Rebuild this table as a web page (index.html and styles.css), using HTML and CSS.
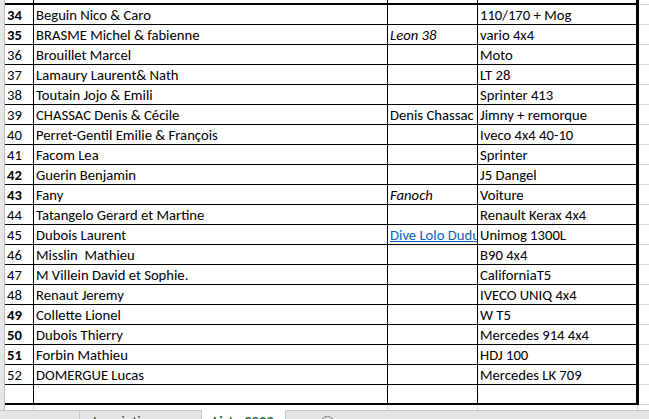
FILE: index.html
```html
<!DOCTYPE html>
<html lang="fr">
<head>
<meta charset="utf-8">
<title>Liste 2022</title>
<link rel="stylesheet" href="styles.css">
</head>
<body>
<div class="sheet">
  <div class="row tail"><div class="hdr"></div><div class="c"></div><div class="c"></div><div class="c"></div><div class="c d"></div><div class="e"></div></div>
  <div class="row first"><div class="hdr"></div><div class="c n bold">34</div><div class="c">Beguin Nico &amp; Caro</div><div class="c"></div><div class="c d">110/170 + Mog</div><div class="e"></div></div>
  <div class="row"><div class="hdr"></div><div class="c n bold">35</div><div class="c">BRASME Michel &amp; fabienne</div><div class="c"><i>Leon 38</i></div><div class="c d">vario 4x4</div><div class="e"></div></div>
  <div class="row"><div class="hdr"></div><div class="c n">36</div><div class="c">Brouillet Marcel</div><div class="c"></div><div class="c d">Moto</div><div class="e"></div></div>
  <div class="row"><div class="hdr"></div><div class="c n">37</div><div class="c">Lamaury Laurent&amp; Nath</div><div class="c"></div><div class="c d">LT 28</div><div class="e"></div></div>
  <div class="row"><div class="hdr"></div><div class="c n">38</div><div class="c">Toutain Jojo &amp; Emili</div><div class="c"></div><div class="c d">Sprinter 413</div><div class="e"></div></div>
  <div class="row"><div class="hdr"></div><div class="c n">39</div><div class="c">CHASSAC Denis &amp; Cécile</div><div class="c">Denis Chassac</div><div class="c d">Jimny + remorque</div><div class="e"></div></div>
  <div class="row"><div class="hdr"></div><div class="c n">40</div><div class="c">Perret-Gentil Emilie &amp; François</div><div class="c"></div><div class="c d">Iveco 4x4 40-10</div><div class="e"></div></div>
  <div class="row"><div class="hdr"></div><div class="c n">41</div><div class="c">Facom Lea</div><div class="c"></div><div class="c d">Sprinter</div><div class="e"></div></div>
  <div class="row"><div class="hdr"></div><div class="c n bold">42</div><div class="c">Guerin Benjamin</div><div class="c"></div><div class="c d">J5 Dangel</div><div class="e"></div></div>
  <div class="row"><div class="hdr"></div><div class="c n bold">43</div><div class="c">Fany</div><div class="c"><i>Fanoch</i></div><div class="c d">Voiture</div><div class="e"></div></div>
  <div class="row"><div class="hdr"></div><div class="c n">44</div><div class="c">Tatangelo Gerard et Martine</div><div class="c"></div><div class="c d">Renault Kerax 4x4</div><div class="e"></div></div>
  <div class="row"><div class="hdr"></div><div class="c n">45</div><div class="c">Dubois Laurent</div><div class="c"><a class="link" href="#">Dive Lolo Dudu</a></div><div class="c d">Unimog 1300L</div><div class="e"></div></div>
  <div class="row"><div class="hdr"></div><div class="c n">46</div><div class="c">Misslin&nbsp; Mathieu</div><div class="c"></div><div class="c d">B90 4x4</div><div class="e"></div></div>
  <div class="row"><div class="hdr"></div><div class="c n">47</div><div class="c">M Villein David et Sophie.</div><div class="c"></div><div class="c d">CaliforniaT5</div><div class="e"></div></div>
  <div class="row"><div class="hdr"></div><div class="c n">48</div><div class="c">Renaut Jeremy</div><div class="c"></div><div class="c d">IVECO UNIQ 4x4</div><div class="e"></div></div>
  <div class="row"><div class="hdr"></div><div class="c n bold">49</div><div class="c">Collette Lionel</div><div class="c"></div><div class="c d">W T5</div><div class="e"></div></div>
  <div class="row"><div class="hdr"></div><div class="c n bold">50</div><div class="c">Dubois Thierry</div><div class="c"></div><div class="c d">Mercedes 914 4x4</div><div class="e"></div></div>
  <div class="row"><div class="hdr"></div><div class="c n bold">51</div><div class="c">Forbin Mathieu</div><div class="c"></div><div class="c d">HDJ 100</div><div class="e"></div></div>
  <div class="row"><div class="hdr"></div><div class="c n">52</div><div class="c">DOMERGUE Lucas</div><div class="c"></div><div class="c d">Mercedes LK 709</div><div class="e"></div></div>
  <div class="row last"><div class="hdr"></div><div class="c n"></div><div class="c"></div><div class="c"></div><div class="c d"></div><div class="e"></div></div>
  <div class="row after"><div class="hdr"></div><div class="c"></div><div class="c"></div><div class="c"></div><div class="c d"></div><div class="e"></div></div>
</div>
<div class="tabs">
  <div class="tab t1"></div>
  <div class="tab t2">Inscriptions</div>
  <div class="tab active">Liste 2022</div>
  <div class="rest"><span class="plus">+</span></div>
</div>
</body>
</html>
```

FILE: styles.css
```css
html, body {
  margin: 0;
  background: #fff;
}
body {
  width: 649px;
  height: 419px;
  overflow: hidden;
  font-family: Carlito, Calibri, "Liberation Sans", sans-serif;
  font-size: 14.667px;
  color: #000;
}
.row {
  display: grid;
  grid-template-columns: 5px 29px 354px 90px 161px 1fr;
  height: 20px;
}
.row > div {
  box-sizing: border-box;
  overflow: hidden;
  white-space: nowrap;
}
.hdr {
  background: #e6e6e6;
  border-right: 1px solid #bdbdbd;
}
.c {
  border-right: 1px solid #000;
  border-bottom: 1px solid #000;
  padding: 0 0 2px 2px;
  display: flex;
  align-items: flex-end;
  line-height: 14px;
}
.c.d {
  border-right-width: 3px;
}
.e {
  border-bottom: 1px solid #dadada;
}
.bold {
  font-weight: bold;
}
.link {
  color: #0563c1;
  text-decoration: underline;
}
.tail {
  height: 3px;
}
.tail .c,
.tail .e {
  border-bottom: 0;
}
.first {
  height: 22px;
}
.first .c {
  border-top: 2px solid #000;
}
.first .e {
  margin-top: 1px;
  border-top: 1px solid #dadada;
}
.last .c {
  border-bottom-width: 2px;
}
.after {
  height: 5px;
}
.after .c {
  border-bottom: 0;
  border-right-color: #dadada;
}
.after .c.d {
  border-right-width: 1px;
  margin-right: 1px;
}
.after .e {
  border-bottom: 0;
}
.tabs {
  display: flex;
  height: 30px;
  background: #e6e6e6;
}
.tab {
  box-sizing: border-box;
  height: 30px;
  border-top: 1px solid #c6c6c6;
  border-right: 1px solid #c6c6c6;
  padding-top: 3px;
  line-height: 14px;
  color: #444;
  text-align: center;
  white-space: nowrap;
}
.t1 { width: 80px; }
.t2 {
  width: 122px;
  text-align: left;
  padding-left: 13px;
}
.active {
  width: 84px;
  background: #fff;
  border-top-color: #fff;
  color: #217346;
  font-weight: bold;
}
.rest {
  flex: 1;
  border-top: 1px solid #c6c6c6;
}
.plus {
  display: block;
  box-sizing: border-box;
  width: 15px;
  height: 15px;
  margin: 5px 0 0 34px;
  border: 1px solid #777;
  border-radius: 50%;
  font-size: 13px;
  line-height: 13px;
  text-align: center;
  color: #555;
}
```
